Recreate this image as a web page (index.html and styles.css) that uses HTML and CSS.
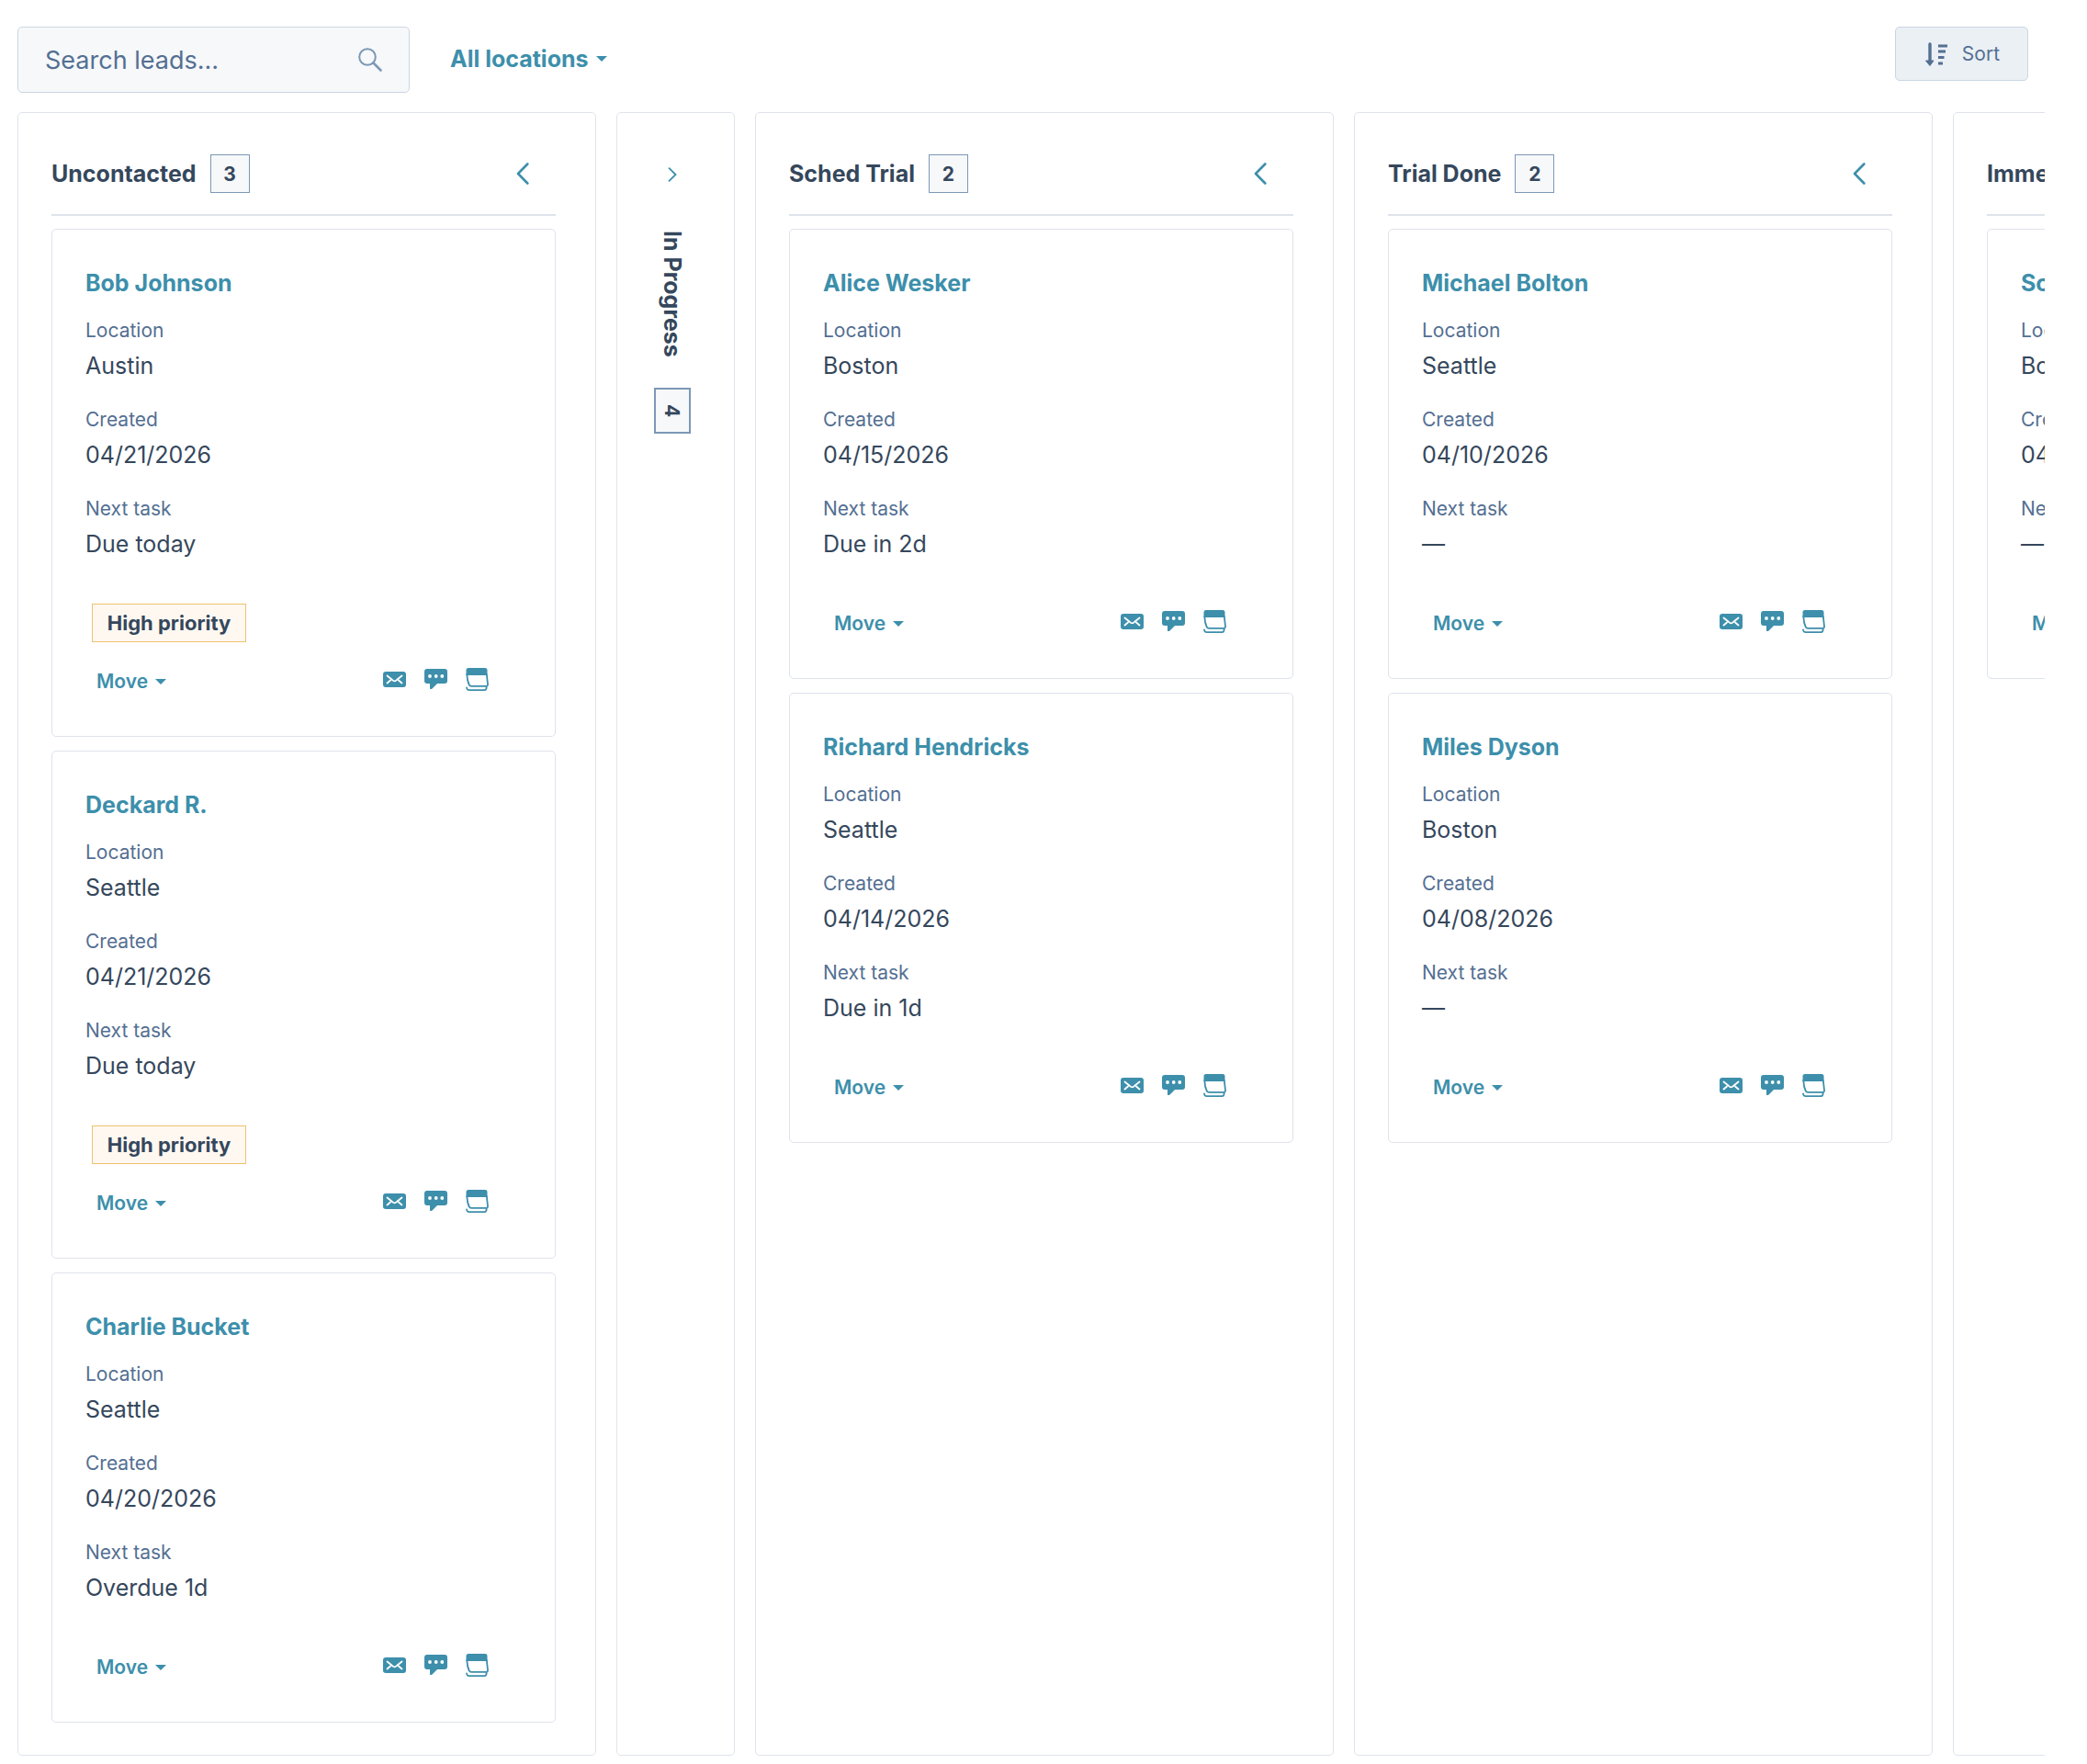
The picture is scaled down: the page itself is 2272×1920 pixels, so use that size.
FILE: index.html
```html
<!DOCTYPE html>
<html lang="en">
<head>
<meta charset="utf-8">
<meta name="viewport" content="width=device-width, initial-scale=1">
<title>Leads</title>
<link rel="stylesheet" href="styles.css">
</head>
<body>
<svg class="sprite" aria-hidden="true">
  <symbol id="mail" viewBox="0 0 25 26"><rect x="0" y="4" width="25" height="17" rx="3" fill="currentColor"/><path d="M4.500 8.500l5.500 4.500q2.500 2.600 5 0l5.500-4.500M4.500 16.500l3.500-3M20.500 16.500l-3.500-3" fill="none" stroke="#fff" stroke-width="1.800" stroke-linecap="round"/></symbol>
  <symbol id="chat" viewBox="0 0 25 26"><path d="M3 1h19a3 3 0 0 1 3 3v10a3 3 0 0 1-3 3h-8l-5.500 5.500q-1.500 1-2.500 0V17H3a3 3 0 0 1-3-3V4a3 3 0 0 1 3-3z" fill="currentColor"/><g fill="#fff"><circle cx="6" cy="9" r="1.900"/><circle cx="12.700" cy="9" r="1.900"/><circle cx="19.300" cy="9" r="1.900"/></g></symbol>
  <symbol id="calendar" viewBox="0 0 25 26"><path d="M3 0h18a2.500 2.500 0 0 1 2.500 2.500V8H.5V2.500A2.500 2.500 0 0 1 3 0z" fill="currentColor"/><path d="M1.300 7c.2 5 1 8.500 2.500 11.500q.7 1.300 2.200 1.300h16q2.300 0 2-2.300L22.800 7M1 21.500q.3 2.700 3 2.700h16.500q2 0 2.200-3.500" fill="none" stroke="currentColor" stroke-width="1.800" stroke-linecap="round"/></symbol>
  <symbol id="caret" viewBox="0 0 12 6"><path d="M0 0h12L6 6z" fill="currentColor"/></symbol>
  <symbol id="collapse" viewBox="0 0 14 24"><path d="M12.300 1.500L2 12l10.300 10.500" fill="none" stroke="currentColor" stroke-width="2.600" stroke-linecap="round" stroke-linejoin="round"/></symbol>
</svg>

<header class="toolbar">
  <label class="search">
    <input type="search" placeholder="Search leads..." aria-label="Search leads">
    <svg class="search-icon" viewBox="0 0 26 26" aria-hidden="true"><circle cx="10" cy="10" r="8.800" fill="none" stroke="currentColor" stroke-width="2"/><path d="M16.500 16.500l8 8" stroke="currentColor" stroke-width="2.600" stroke-linecap="round"/></svg>
  </label>
  <button class="filter" type="button">All locations <svg class="caret" aria-hidden="true"><use href="#caret"/></svg></button>
  <button class="sort" type="button"><svg class="sort-icon" viewBox="0 0 24 26" aria-hidden="true"><path d="M5 2v20" stroke="currentColor" stroke-width="3.400" stroke-linecap="round"/><path d="M.500 20h8.500L5 25.500z" fill="currentColor" stroke="currentColor" stroke-linejoin="round"/><path d="M14 4h10M14 10h8M14 16.500h6.500M14 23h5" stroke="currentColor" stroke-width="3"/></svg>Sort</button>
</header>

<main class="board">
  <section class="column">
    <header class="column-head"><h2>Uncontacted</h2><span class="count">3</span><button class="toggle" type="button" aria-label="Collapse Uncontacted"><svg aria-hidden="true"><use href="#collapse"/></svg></button></header>
    <article class="card">
      <a class="name" href="#">Bob Johnson</a>
      <dl><div><dt>Location</dt><dd>Austin</dd></div><div><dt>Created</dt><dd>04/21/2026</dd></div><div><dt>Next task</dt><dd>Due today</dd></div></dl>
      <span class="tag">High priority</span>
      <footer class="actions"><button class="move" type="button">Move <svg class="caret" aria-hidden="true"><use href="#caret"/></svg></button><button class="icon" type="button" aria-label="Email"><svg><use href="#mail"/></svg></button><button class="icon" type="button" aria-label="Message"><svg><use href="#chat"/></svg></button><button class="icon" type="button" aria-label="Schedule"><svg><use href="#calendar"/></svg></button></footer>
    </article>
    <article class="card">
      <a class="name" href="#">Deckard R.</a>
      <dl><div><dt>Location</dt><dd>Seattle</dd></div><div><dt>Created</dt><dd>04/21/2026</dd></div><div><dt>Next task</dt><dd>Due today</dd></div></dl>
      <span class="tag">High priority</span>
      <footer class="actions"><button class="move" type="button">Move <svg class="caret" aria-hidden="true"><use href="#caret"/></svg></button><button class="icon" type="button" aria-label="Email"><svg><use href="#mail"/></svg></button><button class="icon" type="button" aria-label="Message"><svg><use href="#chat"/></svg></button><button class="icon" type="button" aria-label="Schedule"><svg><use href="#calendar"/></svg></button></footer>
    </article>
    <article class="card">
      <a class="name" href="#">Charlie Bucket</a>
      <dl><div><dt>Location</dt><dd>Seattle</dd></div><div><dt>Created</dt><dd>04/20/2026</dd></div><div><dt>Next task</dt><dd>Overdue 1d</dd></div></dl>
      <footer class="actions"><button class="move" type="button">Move <svg class="caret" aria-hidden="true"><use href="#caret"/></svg></button><button class="icon" type="button" aria-label="Email"><svg><use href="#mail"/></svg></button><button class="icon" type="button" aria-label="Message"><svg><use href="#chat"/></svg></button><button class="icon" type="button" aria-label="Schedule"><svg><use href="#calendar"/></svg></button></footer>
    </article>
  </section>

  <section class="column collapsed">
    <button class="toggle" type="button" aria-label="Expand In Progress"><svg viewBox="0 0 10 16" aria-hidden="true"><path d="M1.500 1.200L8.500 8l-7 6.800" fill="none" stroke="currentColor" stroke-width="1.800" stroke-linecap="round" stroke-linejoin="round"/></svg></button>
    <h2>In Progress</h2>
    <span class="count">4</span>
  </section>

  <section class="column">
    <header class="column-head"><h2>Sched Trial</h2><span class="count">2</span><button class="toggle" type="button" aria-label="Collapse Sched Trial"><svg aria-hidden="true"><use href="#collapse"/></svg></button></header>
    <article class="card">
      <a class="name" href="#">Alice Wesker</a>
      <dl><div><dt>Location</dt><dd>Boston</dd></div><div><dt>Created</dt><dd>04/15/2026</dd></div><div><dt>Next task</dt><dd>Due in 2d</dd></div></dl>
      <footer class="actions"><button class="move" type="button">Move <svg class="caret" aria-hidden="true"><use href="#caret"/></svg></button><button class="icon" type="button" aria-label="Email"><svg><use href="#mail"/></svg></button><button class="icon" type="button" aria-label="Message"><svg><use href="#chat"/></svg></button><button class="icon" type="button" aria-label="Schedule"><svg><use href="#calendar"/></svg></button></footer>
    </article>
    <article class="card">
      <a class="name" href="#">Richard Hendricks</a>
      <dl><div><dt>Location</dt><dd>Seattle</dd></div><div><dt>Created</dt><dd>04/14/2026</dd></div><div><dt>Next task</dt><dd>Due in 1d</dd></div></dl>
      <footer class="actions"><button class="move" type="button">Move <svg class="caret" aria-hidden="true"><use href="#caret"/></svg></button><button class="icon" type="button" aria-label="Email"><svg><use href="#mail"/></svg></button><button class="icon" type="button" aria-label="Message"><svg><use href="#chat"/></svg></button><button class="icon" type="button" aria-label="Schedule"><svg><use href="#calendar"/></svg></button></footer>
    </article>
  </section>

  <section class="column">
    <header class="column-head"><h2>Trial Done</h2><span class="count">2</span><button class="toggle" type="button" aria-label="Collapse Trial Done"><svg aria-hidden="true"><use href="#collapse"/></svg></button></header>
    <article class="card">
      <a class="name" href="#">Michael Bolton</a>
      <dl><div><dt>Location</dt><dd>Seattle</dd></div><div><dt>Created</dt><dd>04/10/2026</dd></div><div><dt>Next task</dt><dd>—</dd></div></dl>
      <footer class="actions"><button class="move" type="button">Move <svg class="caret" aria-hidden="true"><use href="#caret"/></svg></button><button class="icon" type="button" aria-label="Email"><svg><use href="#mail"/></svg></button><button class="icon" type="button" aria-label="Message"><svg><use href="#chat"/></svg></button><button class="icon" type="button" aria-label="Schedule"><svg><use href="#calendar"/></svg></button></footer>
    </article>
    <article class="card">
      <a class="name" href="#">Miles Dyson</a>
      <dl><div><dt>Location</dt><dd>Boston</dd></div><div><dt>Created</dt><dd>04/08/2026</dd></div><div><dt>Next task</dt><dd>—</dd></div></dl>
      <footer class="actions"><button class="move" type="button">Move <svg class="caret" aria-hidden="true"><use href="#caret"/></svg></button><button class="icon" type="button" aria-label="Email"><svg><use href="#mail"/></svg></button><button class="icon" type="button" aria-label="Message"><svg><use href="#chat"/></svg></button><button class="icon" type="button" aria-label="Schedule"><svg><use href="#calendar"/></svg></button></footer>
    </article>
  </section>

  <section class="column">
    <header class="column-head"><h2>Immediate</h2></header>
    <article class="card">
      <a class="name" href="#">Scott</a>
      <dl><div><dt>Location</dt><dd>Boston</dd></div><div><dt>Created</dt><dd>04/08/2026</dd></div><div><dt>Next task</dt><dd>—</dd></div></dl>
      <footer class="actions"><button class="move" type="button">Move</button></footer>
    </article>
  </section>
</main>
</body>
</html>
```
FILE: styles.css
```css
:root {
  --ink: #35475c;
  --muted: #546f92;
  --link: #3d8fab;
  --line: #dfe3eb;
  --edge: #cbd6e2;
  --steel: #7c98b6;
  --pale: #f6f8fa;
}

* {
  box-sizing: border-box;
}

body {
  margin: 0;
  background: #fff;
  color: var(--ink);
  font-family: Inter, "Liberation Sans", sans-serif;
  font-size: 25px;
}

button {
  padding: 0;
  border: 0;
  background: none;
  color: var(--link);
  font: inherit;
  cursor: pointer;
}

svg {
  display: block;
}

h2,
dl,
dd {
  margin: 0;
}

.sprite {
  position: absolute;
  width: 0;
  height: 0;
}

/* Toolbar */
.toolbar {
  display: flex;
  align-items: flex-start;
  padding: 29px 64px 21px 19px;
}

.search {
  display: flex;
  align-items: center;
  width: 427px;
  height: 72px;
  padding: 0 29px;
  border: 1px solid var(--edge);
  border-radius: 5px;
  background: var(--pale);
}

.search input {
  flex: 1;
  min-width: 0;
  padding: 0;
  border: 0;
  outline: 0;
  background: none;
  color: var(--muted);
  font: inherit;
  font-size: 27px;
}

.search input::placeholder {
  color: var(--muted);
  opacity: 1;
}

.search-icon {
  width: 26px;
  height: 26px;
  color: var(--steel);
}

.filter {
  display: flex;
  align-items: center;
  gap: 8px;
  height: 70px;
  margin-left: 44px;
  font-weight: 700;
}

.caret {
  width: 12px;
  height: 6px;
}

.sort {
  display: flex;
  align-items: center;
  gap: 16px;
  height: 59px;
  margin-left: auto;
  padding: 0 30px 0 32px;
  border: 1px solid var(--edge);
  border-radius: 5px;
  background: #eaf0f4;
  color: var(--muted);
  font-size: 21px;
}

.sort-icon {
  width: 24px;
  height: 26px;
}

/* Board */
.board {
  display: flex;
  gap: 22px;
  margin-right: 46px;
  padding: 0 0 9px 19px;
  overflow: hidden;
}

.column {
  flex: 0 0 630px;
  padding: 36px 43px 35px 36px;
  border: 1px solid var(--line);
  border-radius: 5px;
}

.column h2 {
  font-size: 25px;
  font-weight: 700;
  line-height: 30px;
}

.column-head {
  display: flex;
  align-items: center;
  height: 76px;
  margin-bottom: 14px;
  padding: 9px 29px 23px 0;
  border-bottom: 2px solid var(--line);
}

.count {
  display: flex;
  align-items: center;
  justify-content: center;
  width: 43px;
  height: 42px;
  margin-left: 15px;
  border: 1px solid var(--steel);
  background: var(--pale);
  font-size: 21px;
  font-weight: 700;
}

.column-head .toggle {
  margin-left: auto;
}

.toggle svg {
  width: 14px;
  height: 24px;
}

.collapsed {
  display: flex;
  flex: 0 0 129px;
  flex-direction: column;
  align-items: center;
  padding: 59px 8px 36px 0;
}

.collapsed .toggle svg {
  width: 10px;
  height: 16px;
}

.collapsed h2 {
  margin: 53px 0 33px;
  writing-mode: vertical-rl;
}

.collapsed .count {
  width: 40px;
  height: 50px;
  margin: 0;
  border-width: 2px;
  writing-mode: vertical-rl;
}

/* Cards */
.card {
  padding: 42px 36px 47px;
  border: 1px solid var(--line);
  border-radius: 5px;
}

.card + .card {
  margin-top: 15px;
}

.name {
  display: block;
  margin-bottom: 18px;
  color: var(--link);
  font-weight: 700;
  line-height: 32px;
  text-decoration: none;
}

dl {
  display: grid;
  gap: 21px;
}

dt {
  color: var(--muted);
  font-size: 21px;
  line-height: 36px;
}

dd {
  line-height: 40px;
}

.tag {
  display: flex;
  align-items: center;
  justify-content: center;
  width: 168px;
  height: 42px;
  margin: 45px 0 0 7px;
  border: 1px solid #efc16e;
  background: #fef8f1;
  font-size: 22px;
  font-weight: 700;
}

.actions {
  display: flex;
  align-items: flex-start;
  gap: 20px;
  height: 26px;
  margin-top: 53px;
  padding: 0 36px 0 12px;
}

.tag + .actions {
  margin-top: 29px;
}

.move {
  display: flex;
  align-items: center;
  gap: 8px;
  margin-right: auto;
  font-size: 21px;
  font-weight: 600;
  line-height: 28px;
}

.icon {
  margin-top: -1px;
}

.icon svg {
  width: 25px;
  height: 26px;
}
```
